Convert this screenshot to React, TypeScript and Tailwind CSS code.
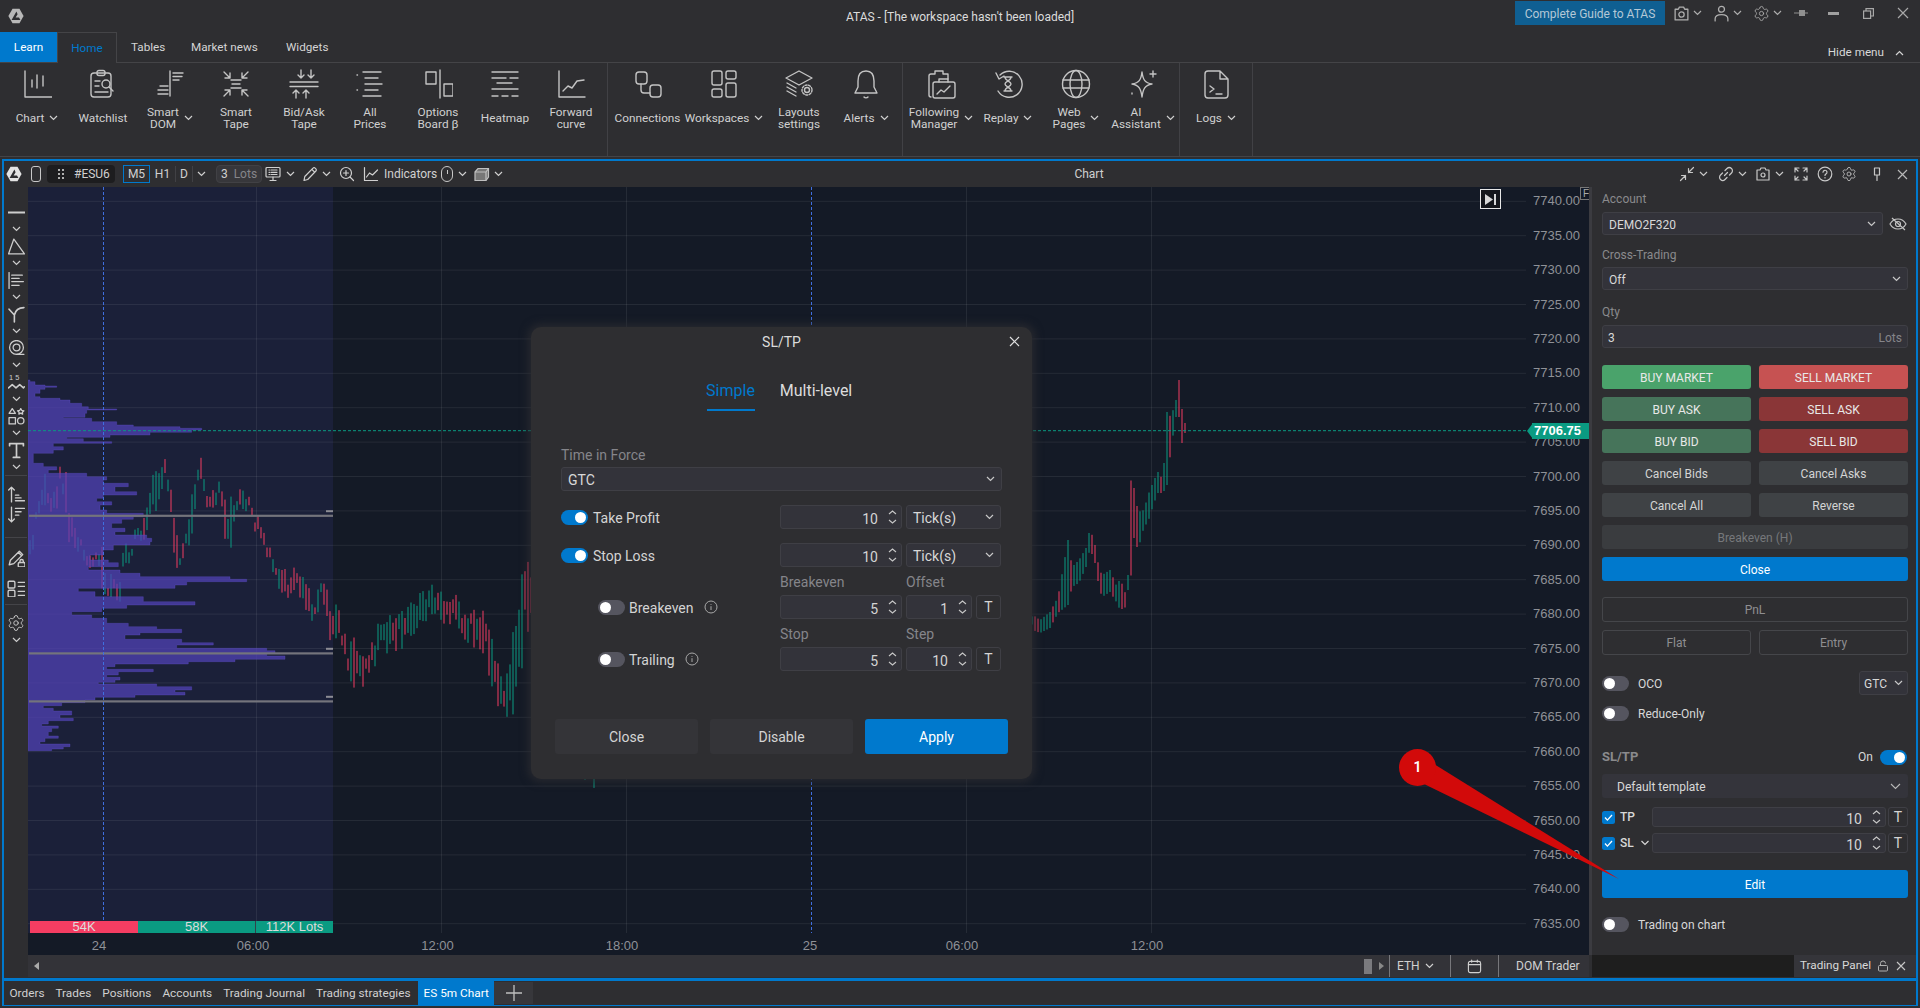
import React from "react";
import { Settings } from "lucide-react";

function Chev({ className = "" }: { className?: string }) {
  return (
    <svg width="9" height="6" viewBox="0 0 9 6" fill="none" stroke="currentColor" strokeWidth="1.2" className={className}>
      <path d="M1 1l3.5 3.5L8 1" />
    </svg>
  );
}

function Ico({ size = 16, vb = 16, sw = 1.2, children, className = "" }: { size?: number; vb?: number; sw?: number; children: React.ReactNode; className?: string }) {
  return (
    <svg width={size} height={size} viewBox={`0 0 ${vb} ${vb}`} fill="none" stroke="currentColor" strokeWidth={sw} strokeLinecap="round" strokeLinejoin="round" className={className}>
      {children}
    </svg>
  );
}

function Logo({ size = 16, color = "#b8b8b8", cut = "#2e2e31" }: { size?: number; color?: string; cut?: string }) {
  return (
    <svg width={size} height={size} viewBox="0 0 16 16">
      <path d="M4.5 0.8h7L15.6 8l-4.1 7.2h-7L.4 8z" fill={color} />
      <path d="M8.4 3.6L3.6 12h8.8l-1.4-2.4H7.6l2-3.4z" fill={cut} />
    </svg>
  );
}

const ribbonIcons: Record<string, React.ReactNode> = {
  chart: <path d="M3 2v26h27M10 11v7M15 6v13M21 7v10" />,
  watch: (<><rect x="3" y="4" width="20" height="24" rx="3" /><rect x="9" y="1.5" width="8" height="5" rx="2" /><path d="M7 12h5M7 17h4M7 23h13M21 18l4 4" /><circle cx="18" cy="15" r="4" /></>),
  dom: <path d="M15 2v25M18 4h10M18 7.5h9M18 11h6M5 17h8M3 21h10M3 25h10" />,
  tape: <path d="M3 3l6 6M9 4v5H4M27 3l-6 6M21 4v5h5M3 27l6-6M9 26v-5H4M27 27l-6-6M21 26v-5h5M10 11h10M11 15h8M10 19h10" />,
  bidask: <path d="M12 1v8M9 6l3 3 3-3M22 1v8M19 6l3 3 3-3M1 13h28M1 17.5h28M7 29v-8M4 24l3-3 3 3M17 29v-8M14 24l3-3 3 3" />,
  all: <path d="M8 3h18M10 9h13M10 15h17M10 21h13M8 27h18M2 6h.5M2 21h.5" />,
  options: (<><rect x="3" y="3" width="10" height="12" /><path d="M17 1v28" /><rect x="21" y="15" width="9" height="12" /></>),
  heat: <path d="M2 3h26M2 9h14M20 9h8M7 14h15M2 20h26M2 27h6M12 27h6M22 27h6" />,
  forward: <path d="M3 2v26h26M7 22l5-5 4 2 5-7 7-1" />,
  conn: (<><rect x="3" y="3" width="11" height="12" rx="3" /><rect x="17" y="16" width="11" height="12" rx="3" /><path d="M8 15v6a3 3 0 0 0 3 3h6" /></>),
  work: (<><rect x="3" y="2" width="10" height="14" rx="2" /><rect x="17" y="2" width="10" height="8" rx="2" /><rect x="3" y="20" width="10" height="8" rx="2" /><rect x="17" y="14" width="10" height="14" rx="2" /></>),
  layouts: (<><path d="M15 2L28 9 15 16 2 9z" /><path d="M3 14l9 5M3 18l9 5M3 22l9 5" /><circle cx="23" cy="21" r="2.5" /><circle cx="23" cy="21" r="5" strokeDasharray="2 1.5" /></>),
  bell: <path d="M15 2c-6 0-8 5-8 10v6l-3 6h22l-3-6v-6c0-5-2-10-8-10zM13 28c1 1.2 3 1.2 4 0" />,
  follow: (<><path d="M8 5H5a2 2 0 0 0-2 2v19a2 2 0 0 0 2 2M9 5V2h8v3h5v5" /><rect x="7" y="13" width="22" height="16" rx="2" /><path d="M13 13v-3h9v3M11 25l4-4 3 2 6-6" /></>),
  replay: <path d="M7 6a13 13 0 1 1-2 16M3 4l3 6 5-3M11 8h8M11 22h8M12 8c0 4 6 4 6 7s-6 3-6 7M18 8c0 4-6 4-6 7s6 3 6 7" />,
  web: (<><circle cx="15" cy="15" r="13.5" /><ellipse cx="15" cy="15" rx="6" ry="13.5" /><path d="M2 11h26M2 19h26" /></>),
  ai: <path d="M14 3c1 8 3 11 10 12-7 1-9 5-10 13-1-8-3-12-10-13 7-1 9-4 10-12zM25 2v6M22 5h6M4 24v1" />,
  logs: <path d="M4 5a3 3 0 0 1 3-3h12l8 8v16a3 3 0 0 1-3 3H7a3 3 0 0 1-3-3zM19 2v8h8M9 17l4 3-4 3M15 25h6" />,
};

type RI = { icon: string; w: number; label: string[]; chev?: boolean };
const sections: { w: number; items: RI[] }[] = [
  {
    w: 608,
    items: [
      { icon: "chart", w: 66, label: ["Chart"], chev: true },
      { icon: "watch", w: 66, label: ["Watchlist"] },
      { icon: "dom", w: 68, label: ["Smart", "DOM"], chev: true },
      { icon: "tape", w: 64, label: ["Smart", "Tape"] },
      { icon: "bidask", w: 72, label: ["Bid/Ask", "Tape"] },
      { icon: "all", w: 60, label: ["All", "Prices"] },
      { icon: "options", w: 76, label: ["Options", "Board β"] },
      { icon: "heat", w: 58, label: ["Heatmap"] },
      { icon: "forward", w: 74, label: ["Forward", "curve"] },
    ],
  },
  {
    w: 295,
    items: [
      { icon: "conn", w: 79, label: ["Connections"] },
      { icon: "work", w: 74, label: ["Workspaces"], chev: true },
      { icon: "layouts", w: 76, label: ["Layouts", "settings"] },
      { icon: "bell", w: 58, label: ["Alerts"], chev: true },
    ],
  },
  {
    w: 277,
    items: [
      { icon: "follow", w: 76, label: ["Following", "Manager"], chev: true },
      { icon: "replay", w: 58, label: ["Replay"], chev: true },
      { icon: "web", w: 78, label: ["Web", "Pages"], chev: true },
      { icon: "ai", w: 56, label: ["AI", "Assistant"], chev: true },
    ],
  },
  { w: 73, items: [{ icon: "logs", w: 72, label: ["Logs"], chev: true }] },
];

function RibbonItem({ item }: { item: RI }) {
  return (
    <div className="flex flex-col items-center shrink-0" style={{ width: item.w }}>
      <div className="mt-[6px] h-[30px] text-[#c4c4c4]">
        <Ico size={30} vb={30} sw={1.4}>{ribbonIcons[item.icon]}</Ico>
      </div>
      <div className="mt-[4px] h-[30px] flex items-center gap-[5px] text-[11.8px] leading-[12px] text-[#d0d0d0] whitespace-nowrap">
        <div className="text-center">
          {item.label.map((l) => (
            <div key={l}>{l}</div>
          ))}
        </div>
        {item.chev && <Chev className="shrink-0" />}
      </div>
    </div>
  );
}

/* ---------- chart data ---------- */
const PY = (p: number) => 201.3 + (7740 - p) * 6.88;
const prices = Array.from({ length: 22 }, (_, i) => 7740 - i * 5);
const vlines = [256, 441, 626, 966, 1151];
const times: [number, string][] = [[99, "24"], [253, "06:00"], [437.5, "12:00"], [622, "18:00"], [810, "25"], [962, "06:00"], [1147, "12:00"]];

const W: [number, number, number][] = [
  [30, 530, 563], [37, 510, 523], [45, 483, 520], [53, 495, 515], [63, 457, 490], [66, 467, 513], [68, 488, 552], [77, 537, 552], [84, 548, 560],
  [97, 553, 566], [102, 550, 603], [107, 573, 597], [120, 573, 592], [122, 548, 578], [133, 543, 550], [140, 527, 548], [146, 510, 537], [148, 497, 513],
  [157, 470, 513], [163, 455, 487], [167, 472, 493], [172, 488, 550], [176, 537, 582], [180, 547, 567], [188, 532, 567], [193, 492, 535], [197, 472, 493],
  [202, 457, 480], [207, 477, 497], [211, 493, 515], [220, 480, 510], [223, 508, 543], [230, 507, 563], [235, 505, 520], [248, 493, 517], [257, 517, 527],
  [260, 527, 542], [272, 553, 568], [277, 557, 580], [283, 565, 595], [297, 580, 600], [307, 585, 610], [315, 598, 617], [323, 577, 603], [333, 610, 645],
  [338, 600, 628], [343, 630, 660], [355, 637, 686], [367, 650, 680], [380, 625, 650], [404, 612, 650], [428, 588, 618], [443, 585, 612], [465, 600, 625],
  [484, 618, 667], [496, 650, 692], [506, 686, 720], [514, 625, 710], [523, 570, 667], [530, 575, 640], [587, 750, 787], [700, 650, 700], [850, 600, 660],
  [1033, 615, 630], [1040, 620, 633], [1050, 612, 628], [1058, 597, 613], [1068, 540, 605], [1072, 567, 587], [1079, 560, 583], [1086, 548, 567], [1090, 528, 548],
  [1095, 545, 563], [1099, 568, 587], [1102, 575, 597], [1110, 570, 592], [1117, 587, 603], [1120, 578, 610], [1126, 595, 607], [1128, 575, 590], [1130, 478, 588],
  [1134, 488, 538], [1138, 512, 550], [1144, 510, 527], [1148, 495, 522], [1154, 480, 503], [1158, 472, 493], [1163, 480, 493], [1167, 412, 485], [1171, 417, 448],
  [1176, 400, 417], [1179, 380, 417], [1182, 409, 443], [1185, 423, 433],
];

function buildBars() {
  let seed = 987654;
  const r = () => {
    seed = (seed * 1103515245 + 12345) & 0x7fffffff;
    return seed / 0x7fffffff;
  };
  let green = "";
  let red = "";
  let wi = 0;
  let walk = 0;
  for (let x = 30; x <= 1185; x += 3) {
    while (wi < W.length - 2 && W[wi + 1][0] < x) wi++;
    const a = W[wi];
    const b = W[wi + 1];
    const k = Math.min(1, (x - a[0]) / (b[0] - a[0]));
    const top = a[1] + (b[1] - a[1]) * k;
    const bot = a[2] + (b[2] - a[2]) * k;
    const slope = b[1] - a[1];
    let t: number;
    let bt: number;
    let up: boolean;
    if (x >= 1033) {
      t = top;
      bt = Math.max(bot, top + 6);
      up = x === 1179 ? false : x === 1176 ? true : r() < 0.2 ? r() < 0.5 : slope < 0;
    } else {
      const env = Math.max(bot - top, 14);
      const len = Math.max(6, env * (0.3 + r() * 0.8));
      const off = (env - len) * r();
      walk = walk * 0.6 + (r() - 0.5) * 18;
      t = top + off + walk;
      bt = t + len;
      up = r() < 0.4 ? r() < 0.5 : slope < 0;
    }
    const seg = `M${x.toFixed(1)} ${t.toFixed(1)}V${bt.toFixed(1)}`;
    if (up) green += seg;
    else red += seg;
  }
  return { green, red };
}
const bars = buildBars();

const P: [number, number][] = [
  [600, 90], [605, 105], [615, 135], [618, 170], [622, 135], [628, 120], [640, 105], [650, 120], [655, 180], [660, 210], [670, 245], [680, 265], [687, 350], [690, 260], [700, 255], [712, 190], [715, 275], [725, 350], [735, 400],
  [740, 540], [745, 605], [750, 575], [757, 450], [765, 330], [772, 200], [776, 250], [785, 335], [790, 160], [800, 190], [810, 160], [820, 100], [850, 130], [860, 170], [870, 145], [880, 260], [890, 320], [900, 310], [910, 385],
  [920, 345], [935, 410], [945, 310], [955, 290], [965, 335], [975, 300], [990, 320], [1000, 430], [1010, 400], [1018, 365], [1030, 335], [1045, 375], [1055, 345], [1065, 440], [1075, 455], [1085, 450], [1095, 340], [1110, 310],
  [1125, 270], [1140, 325], [1148, 355], [1160, 265], [1170, 360], [1180, 420], [1190, 690], [1198, 740], [1205, 560], [1215, 525], [1225, 235], [1235, 285], [1250, 430], [1265, 585], [1275, 380], [1285, 305], [1295, 215],
  [1305, 275], [1315, 320], [1330, 385], [1340, 470], [1348, 545], [1358, 420], [1365, 375], [1378, 545], [1388, 640], [1395, 530],
  [1405, 800], [1412, 825], [1420, 800], [1428, 855], [1438, 705], [1445, 565], [1452, 345], [1460, 320], [1468, 460], [1475, 355], [1485, 320], [1492, 360], [1500, 345], [1507, 295], [1512, 470], [1520, 575], [1530, 525], [1537, 555],
  [1545, 405], [1552, 285], [1560, 255], [1568, 185], [1577, 130], [1585, 160], [1593, 215], [1605, 180], [1615, 220], [1622, 145], [1632, 125], [1638, 175], [1645, 155], [1655, 145], [1668, 175], [1675, 135], [1685, 120], [1692, 210], [1700, 190], [1707, 155],
];
const profilePath = (() => {
  const fy = (z: number) => (180 + z / 3).toFixed(1);
  let d = `M28 ${fy(P[0][0])}`;
  P.forEach(([zy, zx], i) => {
    const next = i + 1 < P.length ? P[i + 1][0] : 1712;
    d += `H${(zx / 3).toFixed(1)}V${fy(next)}`;
  });
  return d + "H28Z";
})();

function ChartSvg() {
  return (
    <svg className="absolute inset-0" width="1561" height="746" viewBox="28 187 1561 746">
      <rect x="28" y="187" width="305" height="746" fill="#1b2039" />
      {prices.map((p) => (
        <line key={p} x1="28" x2="1526" y1={PY(p)} y2={PY(p)} stroke="#ffffff" strokeOpacity="0.075" />
      ))}
      {vlines.map((x) => (
        <line key={x} x1={x + 0.5} x2={x + 0.5} y1="187" y2="933" stroke="#ffffff" strokeOpacity="0.075" />
      ))}
      <path d={bars.green} stroke="#0a9b82" strokeWidth="1" fill="none" />
      <path d={bars.red} stroke="#f23d63" strokeWidth="1" fill="none" />
      <path d={profilePath} fill="#5243b8" fillOpacity="0.72" stroke="#6454d0" strokeOpacity="0.5" strokeWidth="0.6" />
      {[515.7, 653.3, 701.3].map((y) => (
        <g key={y}>
          <rect x="29" y={y - 1} width="304" height="2.2" fill="#74747c" />
          <rect x="326" y={y - 5.5} width="7" height="2" fill="#8c8c94" />
        </g>
      ))}
      <line x1="103.5" x2="103.5" y1="187" y2="933" stroke="#3f6fe0" strokeDasharray="3 2" />
      <line x1="811.5" x2="811.5" y1="187" y2="933" stroke="#3f6fe0" strokeDasharray="3 2" />
      <line x1="28" x2="1527" y1="430.7" y2="430.7" stroke="#0a9b82" strokeDasharray="3 2" />
      <polygon points="1527,431 1533,423 1533,439" fill="#0a9b82" />
    </svg>
  );
}

/* ---------- small controls ---------- */
function Toggle({ on = false }: { on?: boolean }) {
  return (
    <span className={`relative inline-block w-[27px] h-[15px] rounded-full shrink-0 ${on ? "bg-[#0079cd]" : "bg-[#55555f]"}`}>
      <span className={`absolute top-[2px] w-[11px] h-[11px] rounded-full bg-white ${on ? "right-[2px]" : "left-[2px]"}`} />
    </span>
  );
}

function Spinner() {
  return (
    <svg width="9" height="16" viewBox="0 0 9 16" fill="none" stroke="#c8c8c8" strokeWidth="1.1" className="shrink-0">
      <path d="M1 5l3.5-3L8 5M1 11l3.5 3L8 11" />
    </svg>
  );
}

function NumBox({ value, h = 24 }: { value: string; h?: number }) {
  return (
    <div
      className="flex items-center justify-end rounded-[3px] border border-[#3f3f45] bg-[#33333a] pr-[4px] text-[14px] text-[#d4d4d4] flex-1"
      style={{ height: h }}
    >
      <span className="pt-[4px] mr-[10px]">{value}</span>
      <Spinner />
    </div>
  );
}

function TBox({ w = 25, h = 24 }: { w?: number; h?: number }) {
  return (
    <div className="flex items-center justify-center rounded-[3px] border border-[#3f3f45] text-[14px] text-[#d4d4d4]" style={{ width: w, height: h }}>
      T
    </div>
  );
}

function Select({ children, h = 24, className = "" }: { children: React.ReactNode; h?: number; className?: string }) {
  return (
    <div
      className={`flex items-center justify-between rounded-[3px] border border-[#3f3f45] bg-[#33333a] px-[6px] text-[#d8d8d8] ${className}`}
      style={{ height: h }}
    >
      <span className="pt-[2px]">{children}</span>
      <Chev className="text-[#c8c8c8]" />
    </div>
  );
}

function Info() {
  return (
    <svg width="14" height="14" viewBox="0 0 14 14" fill="none" stroke="#a8a8a8" strokeWidth="1" className="shrink-0">
      <circle cx="7" cy="7" r="6" />
      <path d="M7 6.2V10M7 4v.8" />
    </svg>
  );
}

function Btn({ children, cls }: { children: React.ReactNode; cls: string }) {
  return <div className={`h-[24px] pt-[2px] rounded-[3px] flex items-center justify-center text-[12px] ${cls}`}>{children}</div>;
}

function Check() {
  return (
    <svg width="13" height="13" viewBox="0 0 13 13" className="shrink-0">
      <rect width="13" height="13" rx="2.5" fill="#0079cd" />
      <path d="M3 6.5l2.4 2.6L10 4" fill="none" stroke="#fff" strokeWidth="1.3" />
    </svg>
  );
}

/* ---------- left toolbar ---------- */
const toolIcons: React.ReactNode[] = [
  <path d="M.5 8h15M6 8h3" strokeWidth="2" />,
  <path d="M5.500 1L15.500 15H.500z" />,
  <path d="M1 .5v15M3.500 3h10M3.500 6h7M3.500 9h11M3.500 12.500h7" />,
  <path d="M1 3l5 5.500V15M6 8.500C7 4 10.500 1.500 15 1.500" strokeWidth="1.500" />,
  <><circle cx="8" cy="7" r="6.500" /><circle cx="8" cy="7" r="3.200" /><path d="M8 13.500h7" /></>,
  <><text x="1" y="6" fontSize="7" fill="currentColor" stroke="none" fontFamily="Liberation Sans, sans-serif">1 5</text><path d="M.5 13l3.500-3 3.500 3 3.500-3 3.500 3 1-1" strokeWidth="1.500" /></>,
  <><path d="M4 .500l3 4.500H1zM12 .500l1 1.800 2 .3-1.500 1.300.3 1.800-1.800-.9-1.800.9.3-1.800L9 2.600l2-.3z" /><rect x="1" y="9" width="6" height="6" /><circle cx="12" cy="12" r="3" /></>,
  <path d="M1.500 3.500V1.500h13v2M8 1.500V14.500M5 14.500h6" strokeWidth="1.600" />,
];

function LeftToolbar() {
  return (
    <div className="w-[24px] shrink-0 bg-[#2e2e31] flex flex-col items-center text-[#cdcdcd]">
      <div className="h-[16px] w-full flex items-start justify-center pt-[4px]">
        <div className="w-[14px] h-[3px] bg-[radial-gradient(#b8b8b8_0.6px,transparent_0.7px)] bg-[length:2px_2px]" />
      </div>
      {toolIcons.map((ic, i) => (
        <div key={i} className="h-[34px] flex flex-col items-center">
          <div className="h-[18px] flex items-center">
            <Ico size={17} sw={1.2}>{ic}</Ico>
          </div>
          <div className="h-[16px] flex items-center">
            <Chev />
          </div>
        </div>
      ))}
      <div className="w-[22px] h-px bg-[#444448]" />
      <div className="mt-[8px] h-[20px] flex items-center">
        <Ico size={18}><path d="M4 15V2M1.500 4.500L4 2l2.500 2.500M7.500 9h3M7.500 11.500h5M7.500 14h8" /></Ico>
      </div>
      <div className="h-[20px] flex items-center">
        <Ico size={18}><path d="M4 2v13M1.500 12.500L4 15l2.500-2.500M7.500 3h8M7.500 6h5M7.500 9h3" /></Ico>
      </div>
      <div className="mt-[13px] w-[22px] h-px bg-[#444448]" />
      <div className="mt-[10px] h-[20px] flex items-center">
        <Ico size={18}><path d="M2 14l1-4L11 2l3 3-8 8zM10 3l3 3" /><rect x="10" y="12" width="6" height="4" rx="1" /><path d="M11.500 12v-1.200a1.500 1.500 0 0 1 3 0V12" /></Ico>
      </div>
      <div className="mt-[10px] h-[20px] flex items-center">
        <Ico size={18}><rect x="1" y="2" width="6" height="6" rx="1" /><rect x="1" y="10" width="6" height="6" rx="1" /><path d="M10 3h7M10 6.500h7M10 11h7M10 14.500h7" /></Ico>
      </div>
      <div className="mt-[6px] w-[22px] h-px bg-[#444448]" />
      <div className="mt-[8px] h-[20px] flex items-center">
        <Settings size={18} strokeWidth={1.2} />
      </div>
      <div className="h-[14px] flex items-center">
        <Chev />
      </div>
    </div>
  );
}

/* ---------- right panel ---------- */
function RightPanel() {
  return (
    <div className="flex-1 flex flex-col min-w-0">
      <div className="flex-1 pl-[10px] pr-[8px] text-[12px] text-[#d8d8d8] flex flex-col">
        <div className="mt-[5px] h-[14px] leading-[14px] text-[#8a8a8d]">Account</div>
        <div className="mt-[6px] flex items-center gap-[6px]">
          <Select h={23} className="flex-1">DEMO2F320</Select>
          <svg width="18" height="16" viewBox="0 0 18 16" fill="none" stroke="#c4c4c4" strokeWidth="1.2" className="shrink-0 mr-[1px]">
            <path d="M1 8c2-3.500 5-5 8-5s6 1.500 8 5c-2 3.500-5 5-8 5s-6-1.500-8-5zM3 2l13 12" />
            <circle cx="9" cy="8" r="2.500" />
          </svg>
        </div>
        <div className="mt-[13px] h-[14px] leading-[14px] text-[#8a8a8d]">Cross-Trading</div>
        <Select h={23} className="mt-[5px]">Off</Select>
        <div className="mt-[15px] h-[14px] leading-[14px] text-[#8a8a8d]">Qty</div>
        <div className="mt-[6px] h-[23px] pt-[2px] rounded-[3px] border border-[#3f3f45] bg-[#33333a] px-[5px] flex items-center justify-between">
          <span>3</span>
          <span className="text-[#85858a]">Lots</span>
        </div>
        <div className="mt-[17px] grid grid-cols-2 gap-x-[8px] gap-y-[8px] text-[#e8e8e8]">
          <Btn cls="bg-[#4aa36b]">BUY MARKET</Btn>
          <Btn cls="bg-[#c65252]">SELL MARKET</Btn>
          <Btn cls="bg-[#46745a]">BUY ASK</Btn>
          <Btn cls="bg-[#8a3637]">SELL ASK</Btn>
          <Btn cls="bg-[#46745a]">BUY BID</Btn>
          <Btn cls="bg-[#8a3637]">SELL BID</Btn>
          <Btn cls="bg-[#3f4245] text-[#d4d4d4]">Cancel Bids</Btn>
          <Btn cls="bg-[#3f4245] text-[#d4d4d4]">Cancel Asks</Btn>
          <Btn cls="bg-[#3f4245] text-[#d4d4d4]">Cancel All</Btn>
          <Btn cls="bg-[#3f4245] text-[#d4d4d4]">Reverse</Btn>
          <Btn cls="col-span-2 bg-[#3a3c3f] text-[#76787b]">Breakeven (H)</Btn>
          <Btn cls="col-span-2 bg-[#0079cd] text-white">Close</Btn>
        </div>
        <div className="mt-[16px] h-[25px] rounded-[3px] border border-[#45464a] flex items-center justify-center text-[#8e8e91]">PnL</div>
        <div className="mt-[8px] grid grid-cols-2 gap-x-[8px]">
          <div className="h-[25px] rounded-[3px] border border-[#45464a] flex items-center justify-center text-[#8e8e91]">Flat</div>
          <div className="h-[25px] rounded-[3px] border border-[#45464a] flex items-center justify-center text-[#8e8e91]">Entry</div>
        </div>
        <div className="mt-[16px] h-[24px] flex items-center justify-between">
          <div className="flex items-center gap-[9px]">
            <Toggle />
            <span className="pt-[2px]">OCO</span>
          </div>
          <Select className="w-[49px] !px-[4px]">GTC</Select>
        </div>
        <div className="mt-[6px] h-[24px] flex items-center gap-[9px]">
          <Toggle />
          <span className="pt-[2px]">Reduce-Only</span>
        </div>
        <div className="mt-[22px] h-[20px] flex items-center justify-between">
          <span className="text-[13px] font-bold text-[#8a8a8d]">SL/TP</span>
          <div className="flex items-center gap-[7px] mr-[1px]">
            <span>On</span>
            <Toggle on />
          </div>
        </div>
        <div className="mt-[7px] h-[24px] rounded-[3px] bg-[#34343b] pl-[15px] pr-[7px] flex items-center justify-between">
          <span className="pt-[2px]">Default template</span>
          <svg width="11" height="7" viewBox="0 0 11 7" fill="none" stroke="#b8b8b8" strokeWidth="1.1"><path d="M1 1l4.500 4.500L10 1" /></svg>
        </div>
        <div className="mt-[9px] flex items-center">
          <Check />
          <span className="ml-[5px] w-[32px] font-medium">TP</span>
          <NumBox value="10" h={20} />
          <div className="ml-[2px]"><TBox w={20} h={20} /></div>
        </div>
        <div className="mt-[6px] flex items-center">
          <Check />
          <span className="ml-[5px] w-[20px] font-medium">SL</span>
          <Chev className="w-[10px] mr-[2px]" />
          <NumBox value="10" h={20} />
          <div className="ml-[2px]"><TBox w={20} h={20} /></div>
        </div>
        <div className="mt-[17px] h-[28px] pt-[2px] rounded-[3px] bg-[#0079cd] text-white flex items-center justify-center">Edit</div>
        <div className="mt-[16px] h-[20px] flex items-center gap-[9px]">
          <Toggle />
          <span className="pt-[2px]">Trading on chart</span>
        </div>
      </div>
      <div className="h-[22px] mb-[1px] flex shrink-0">
        <div className="w-[202px] bg-[#1e1e1e]" />
        <div className="flex-1 bg-[#35353a] flex items-center pl-[6px] text-[11.7px] text-[#d8d8d8]">
          <span className="w-[71px] whitespace-nowrap">Trading Panel</span>
          <svg width="12" height="12" viewBox="0 0 12 12" fill="none" stroke="#b0b0b0" strokeWidth="1" className="ml-[6px]"><rect x="1.500" y="5.500" width="9" height="5.500" rx="1" /><path d="M3.500 5.500V3.500a2.500 2.500 0 0 1 5 0" /></svg>
          <svg width="10" height="10" viewBox="0 0 10 10" fill="none" stroke="#c8c8c8" strokeWidth="1.1" className="ml-[7px]"><path d="M1 1l8 8M9 1l-8 8" /></svg>
        </div>
      </div>
    </div>
  );
}

/* ---------- dialog ---------- */
function Dialog() {
  return (
    <div className="absolute left-[531px] top-[327px] w-[501px] h-[452px] rounded-[10px] bg-[#2e2e31] shadow-[0_0_9px_3px_rgba(46,46,49,0.75)] px-[30px] z-10 text-[#d4d4d4]">
      <div className="relative h-[30px] flex items-center justify-center text-[14px] text-[#dcdcdc]">
        SL/TP
        <svg width="11" height="11" viewBox="0 0 11 11" fill="none" stroke="#e0e0e0" strokeWidth="1.2" className="absolute right-[-18px] top-[9px]">
          <path d="M1 1l9 9M10 1l-9 9" />
        </svg>
      </div>
      <div className="mt-[19px] h-[35px] pr-[3px] flex justify-center gap-[24px] text-[16px]">
        <div className="w-[48px] h-[35px] flex items-center justify-center whitespace-nowrap pb-[4px] border-b-2 border-[#0079cd] text-[#0079cd]">Simple</div>
        <div className="w-[75px] h-[35px] flex items-center justify-center whitespace-nowrap pb-[6px] text-[#dcdcdc]">Multi-level</div>
      </div>
      <div className="mt-[36px] h-[14px] pt-[1px] leading-[14px] text-[14px] text-[#85858a]">Time in Force</div>
      <Select className="mt-[6px] text-[14px]">GTC</Select>
      <div className="mt-[14px] flex items-center">
        <div className="w-[219px] flex items-center gap-[5px] text-[14px]"><Toggle on /><span className="pt-[2px]">Take Profit</span></div>
        <div className="w-[122px] flex"><NumBox value="10" /></div>
        <div className="ml-[4px] w-[95px]"><Select className="text-[14px]">Tick(s)</Select></div>
      </div>
      <div className="mt-[14px] flex items-center">
        <div className="w-[219px] flex items-center gap-[5px] text-[14px]"><Toggle on /><span className="pt-[2px]">Stop Loss</span></div>
        <div className="w-[122px] flex"><NumBox value="10" /></div>
        <div className="ml-[4px] w-[95px]"><Select className="text-[14px]">Tick(s)</Select></div>
      </div>
      <div className="mt-[8px] h-[14px] leading-[14px] text-[14px] text-[#85858a] flex">
        <span className="ml-[219px] w-[126px]">Breakeven</span>
        <span>Offset</span>
      </div>
      <div className="mt-[6px] flex items-center">
        <div className="w-[219px] pl-[37px] flex items-center text-[14px]">
          <Toggle />
          <span className="ml-[4px] pt-[2px]">Breakeven</span>
          <span className="ml-[10px]"><Info /></span>
        </div>
        <div className="w-[122px] flex"><NumBox value="5" /></div>
        <div className="ml-[4px] w-[66px] flex"><NumBox value="1" /></div>
        <div className="ml-[4px]"><TBox /></div>
      </div>
      <div className="mt-[8px] h-[14px] leading-[14px] text-[14px] text-[#85858a] flex">
        <span className="ml-[219px] w-[126px]">Stop</span>
        <span>Step</span>
      </div>
      <div className="mt-[6px] flex items-center">
        <div className="w-[219px] pl-[37px] flex items-center text-[14px]">
          <Toggle />
          <span className="ml-[4px] pt-[2px]">Trailing</span>
          <span className="ml-[10px]"><Info /></span>
        </div>
        <div className="w-[122px] flex"><NumBox value="5" /></div>
        <div className="ml-[4px] w-[66px] flex"><NumBox value="10" /></div>
        <div className="ml-[4px]"><TBox /></div>
      </div>
      <div className="mt-[48px] mx-[-6px] flex gap-[12px] text-[14px]">
        <div className="flex-1 h-[35px] pt-[2px] rounded-[3px] bg-[#343438] flex items-center justify-center">Close</div>
        <div className="flex-1 h-[35px] pt-[2px] rounded-[3px] bg-[#343438] flex items-center justify-center">Disable</div>
        <div className="flex-1 h-[35px] pt-[2px] rounded-[3px] bg-[#0079cd] text-white flex items-center justify-center">Apply</div>
      </div>
    </div>
  );
}

/* ---------- app ---------- */
export default function App() {
  return (
    <div className="relative w-[1920px] h-[1008px] overflow-hidden bg-[#2e2e31] flex flex-col text-[#d4d4d4] [font-family:'Roboto',sans-serif]">
      {/* title bar */}
      <div className="h-[32px] shrink-0 grid grid-cols-[1fr_auto_1fr] items-center">
        <div className="pl-[8px]"><Logo /></div>
        <div className="pt-[2px] text-[12px] text-[#dcdcdc]">ATAS - [The workspace hasn't been loaded]</div>
        <div className="flex items-center justify-end h-full pb-[6px] text-[#aeaeae]">
          <div className="w-[150px] h-[24px] pt-[2px] bg-[#0f5f92] text-[#b4c8d6] text-[12px] flex items-center justify-center whitespace-nowrap">Complete Guide to ATAS</div>
          <div className="ml-[8px]"><Ico size={17}><path d="M2 4h3l1-2h4l1 2h3v10H2z" /><circle cx="8" cy="9" r="2.500" /></Ico></div>
          <Chev className="ml-[3px]" />
          <div className="ml-[11px]"><Ico size={17}><circle cx="8" cy="4" r="2.800" /><path d="M2 15v-2c0-2.500 2-4 6-4s6 1.500 6 4v2" /></Ico></div>
          <Chev className="ml-[3px]" />
          <div className="ml-[11px]"><Settings size={17} strokeWidth={1.2} /></div>
          <Chev className="ml-[3px]" />
          <div className="ml-[12px] w-[14px]"><svg width="14" height="8" viewBox="0 0 14 8" fill="#909090"><path d="M0 3.500h5V1h6v2.500h3v1h-3V7H5V4.500H0z" /></svg></div>
          <div className="ml-[20px] w-[11px] h-[3px] bg-[#a0a0a0]" />
          <div className="ml-[24px]"><svg width="11" height="11" viewBox="0 0 11 11" fill="none" stroke="#a8a8a8" strokeWidth="1.2"><rect x="0.600" y="3" width="7" height="7.400" /><path d="M3 3V.6h7.400V8H8" /></svg></div>
          <div className="ml-[23px] mr-[11px]"><svg width="12" height="12" viewBox="0 0 12 12" fill="none" stroke="#a8a8a8" strokeWidth="1.2"><path d="M1 1l10 10M11 1L1 11" /></svg></div>
        </div>
      </div>

      {/* tabs row */}
      <div className="h-[31px] shrink-0 flex items-stretch border-b border-[#444447] text-[11.7px]">
        <div className="w-[57px] pt-[2px] bg-[#0079cd] text-white flex items-center justify-center">Learn</div>
        <div className="w-[60px] h-[31px] pt-[2px] border border-b-0 border-[#444447] bg-[#2e2e31] text-[#0079cd] flex items-center justify-center">Home</div>
        <div className="ml-[14px] w-[32px] pt-[2px] flex items-center">Tables</div>
        <div className="ml-[28px] w-[67px] pt-[2px] flex items-center whitespace-nowrap">Market news</div>
        <div className="ml-[28px] pt-[2px] flex items-center">Widgets</div>
        <div className="ml-auto flex items-center pr-[16px] pt-[12px]">
          <span className="text-[#d8d8d8] whitespace-nowrap">Hide menu</span>
          <Chev className="ml-[11px] rotate-180" />
        </div>
      </div>

      {/* ribbon */}
      <div className="h-[94px] shrink-0 flex border-b border-[#444447]">
        {sections.map((s, i) => (
          <div key={i} className={`h-full flex border-r border-[#414145] ${i === 0 ? "pl-[4px]" : "pl-0"}`} style={{ width: s.w }}>
            {s.items.map((it) => (
              <RibbonItem key={it.icon} item={it} />
            ))}
          </div>
        ))}
      </div>

      {/* chart window */}
      <div className="mt-[2px] mx-[2px] h-[847px] shrink-0 border-t-2 border-x-2 border-b border-[#0079cd] flex flex-col">
        {/* header */}
        <div className="h-[26px] shrink-0 flex items-center text-[12px] text-[#d0d0d0]">
          <div className="ml-[2px]"><Logo color="#e4e4e4" /></div>
          <div className="ml-[9px] w-[10px] h-[16px] rounded-[3px] border border-[#c8c8c8]" />
          <div className="ml-[6px] w-[68px] h-[18px] rounded-[4px] bg-[#1d1d1f] flex items-center">
            <svg width="6" height="10" viewBox="0 0 6 10" fill="#b0b0b0" className="ml-[11px]"><rect width="2" height="2" /><rect x="4" width="2" height="2" /><rect y="4" width="2" height="2" /><rect x="4" y="4" width="2" height="2" /><rect y="8" width="2" height="2" /><rect x="4" y="8" width="2" height="2" /></svg>
            <span className="ml-[10px]">#ESU6</span>
          </div>
          <div className="ml-[8px] w-[27px] h-[18px] border border-[#0079cd] flex items-center justify-center">M5</div>
          <div className="w-[25px] text-center">H1</div>
          <div className="h-[16px] w-px bg-[#414145]" />
          <div className="w-[16px] text-center">D</div>
          <div className="h-[16px] w-px bg-[#414145]" />
          <div className="w-[16px] flex justify-center"><Chev /></div>
          <div className="ml-[7px] w-[46px] h-[18px] rounded-[4px] border border-[#414145] bg-[#37373b] flex items-center justify-center gap-[6px] whitespace-nowrap">
            <span>3</span><span className="text-[#85858a]">Lots</span>
          </div>
          <div className="ml-[3px]"><Ico size={16}><rect x="1" y="1.500" width="14" height="9.500" rx="1" /><path d="M4 4h.6M6 4h6M4 6.300h.6M6 6.300h6M4 8.500h.6M6 8.500h6M8 11v3M5 14.500h6" /></Ico></div>
          <Chev className="ml-[5px]" />
          <div className="ml-[7px]"><Ico size={16}><path d="M2 14.500l.8-4L11 2.200a1.500 1.500 0 0 1 2.200 0l.7.700a1.500 1.500 0 0 1 0 2.100L5.700 13.500zM10 3.500l2.600 2.600" /></Ico></div>
          <Chev className="ml-[4px]" />
          <div className="ml-[8px]"><Ico size={16}><circle cx="7" cy="7" r="5.500" /><path d="M11 11l3.500 3.500M7 4.500v5M4.500 7h5" /></Ico></div>
          <div className="ml-[8px]"><Ico size={16}><path d="M1.500 1.500v13h13M3.500 11l3-4 3 2 5-5" /></Ico></div>
          <span className="ml-[5px] w-[52px] whitespace-nowrap">Indicators</span>
          <div className="ml-[5px] w-[12px] h-[16px] rounded-full border border-[#c8c8c8] flex justify-center pt-[3px]"><div className="w-px h-[4px] bg-[#c8c8c8]" /></div>
          <Chev className="ml-[5px]" />
          <div className="ml-[7px]"><svg width="16" height="15" viewBox="0 0 16 15" fill="none" stroke="#c0c0c0" strokeWidth="1.200"><path d="M1 5l3-3.500h10.500V10L12 13.500H1z" fill="#777" /><path d="M1 5h11v8.500M12 5l2.500-3.500" /></svg></div>
          <Chev className="ml-[4px]" />
          <div className="w-[1160px] pl-[12px] text-center">Chart</div>
          <div className="ml-auto flex items-center text-[#c8c8c8] pr-[8px]">
            <Ico size={16}><path d="M1.500 14.500L6.500 9.500M2.500 9.500h4v4M14.500 1.500l-5 5M13.500 6.500h-4v-4" /></Ico>
            <Chev className="ml-[4px]" />
            <div className="ml-[10px]"><Ico size={16}><path d="M6.500 9.500l3-3M7 4.500l2-2a3 3 0 0 1 4.500 4.500l-2 2M9 11.500l-2 2a3 3 0 0 1-4.500-4.500l2-2" /></Ico></div>
            <Chev className="ml-[4px]" />
            <div className="ml-[8px]"><Ico size={16}><path d="M2 4h3l1-2h4l1 2h3v10H2z" /><circle cx="8" cy="9" r="2" /></Ico></div>
            <Chev className="ml-[4px]" />
            <div className="ml-[9px]"><Ico size={16}><path d="M2 6V2h4M10 2h4v4M2 10v4h4M14 10v4h-4M2 2l3 3M14 2l-3 3M2 14l3-3M14 14l-3-3" /></Ico></div>
            <div className="ml-[8px]"><Ico size={16}><circle cx="8" cy="8" r="6.800" /><path d="M6 6.200a2 2 0 1 1 2.800 1.900c-.6.300-.8.700-.8 1.400M8 11.500v.5" /></Ico></div>
            <div className="ml-[8px]"><Settings size={16} strokeWidth={1.2} /></div>
            <div className="ml-[12px]"><Ico size={16}><path d="M5.500 2h5v7h-5zM8 9v5.500" /></Ico></div>
            <div className="ml-[12px]"><svg width="11" height="11" viewBox="0 0 11 11" fill="none" stroke="#b8b8b8" strokeWidth="1.200"><path d="M1 1l9 9M10 1l-9 9" /></svg></div>
          </div>
        </div>

        {/* body */}
        <div className="flex-1 flex min-h-0">
          <LeftToolbar />
          <div className="w-[1561px] shrink-0 flex flex-col">
            <div className="relative h-[746px] shrink-0 bg-[#141a26] overflow-hidden [font-family:'Liberation_Sans',Arial,sans-serif]">
              <ChartSvg />
              {prices.map((p) => (
                <div key={p} className="absolute left-[1505px] text-[13px] leading-[16px] text-[#8f9197]" style={{ top: PY(p) - 187 - 8 }}>
                  {p.toFixed(2)}
                </div>
              ))}
              <div className="absolute left-[1504px] top-[236px] w-[57px] h-[16px] bg-[#0a9b82] text-right pr-[8px] text-[13px] leading-[16px] font-bold text-white">7706.75</div>
              <div className="absolute left-[1452px] top-[2px] w-[21px] h-[20px] border border-[#e8e8e8] bg-[#15171c] flex items-center justify-center">
                <svg width="13" height="13" viewBox="0 0 13 13" fill="#d8d8d8"><path d="M1 1l8 5.500L1 12z" /><rect x="10" y="1" width="2" height="11" /></svg>
              </div>
              <div className="absolute left-[1552px] top-0 w-[12px] h-[13px] border border-[#777] text-[10px] leading-[12px] text-center text-[#aaa]">F</div>
              <div className="absolute left-[2px] top-[734px] w-[303px] h-[12px] flex text-[13px] leading-[12px] text-center text-[#dcdcdc]">
                <div className="w-[108px] bg-[#f43d62]">54K</div>
                <div className="w-[117px] bg-[#0a9b82]">58K</div>
                <div className="w-[1px] bg-[#33414a]" />
                <div className="flex-1 bg-[#0a9b82] whitespace-nowrap">112K Lots</div>
              </div>
            </div>
            <div className="relative h-[22px] shrink-0 bg-[#141a26] [font-family:'Liberation_Sans',Arial,sans-serif] text-[13px] leading-[26px] text-[#8f9197]">
              {times.map(([x, t]) => (
                <span key={x} className="absolute -translate-x-1/2" style={{ left: x - 28 }}>{t}</span>
              ))}
            </div>
            <div className="h-[22px] mb-[1px] shrink-0 bg-[#333338] flex items-center text-[12px] text-[#d0d0d0]">
              <svg width="5" height="8" viewBox="0 0 5 8" fill="#aaa" className="ml-[6px]"><path d="M5 0v8L0 4z" /></svg>
              <div className="ml-auto w-[8px] h-[15px] bg-[#7a7a7e]" />
              <svg width="5" height="8" viewBox="0 0 5 8" fill="#888" className="ml-[7px]"><path d="M0 0v8l5-4z" /></svg>
              <div className="ml-[5px] w-px h-[22px] bg-[#77777b]" />
              <div className="w-[60px] pl-[7px] flex items-center">
                <span className="w-[28px]">ETH</span>
                <Chev />
              </div>
              <div className="w-px h-[22px] bg-[#77777b]" />
              <div className="w-[47px] flex justify-center"><Ico size={15}><rect x="1.500" y="2.500" width="13" height="12" rx="2" /><path d="M1.500 6h13M5 1v2.500M11 1v2.500" /></Ico></div>
              <div className="w-px h-[22px] bg-[#77777b]" />
              <span className="w-[90px] pl-[17px] whitespace-nowrap">DOM Trader</span>
            </div>
          </div>
          <div className="w-[3px] shrink-0 bg-[#3b3b40] mb-[23px]" />
          <RightPanel />
        </div>

        <div className="h-[3px] shrink-0 bg-[#0079cd]" />

        {/* bottom tabs */}
        <div className="h-[24px] shrink-0 flex items-center text-[11.8px] text-[#d0d0d0]">
          {["Orders", "Trades", "Positions", "Accounts", "Trading Journal", "Trading strategies"].map((t) => (
            <div key={t} className="px-[5.500px] pt-[1px] whitespace-nowrap">{t}</div>
          ))}
          <div className="ml-[2px] h-[24px] pt-[1px] px-[5.500px] bg-[#0079cd] text-white flex items-center whitespace-nowrap">ES 5m Chart</div>
          <div className="w-[39px] h-[22px] bg-[#37373b] flex items-center justify-center">
            <svg width="16" height="16" viewBox="0 0 16 16" stroke="#c0c0c0" strokeWidth="1.300"><path d="M8 0v16M0 8h16" /></svg>
          </div>
        </div>
      </div>

      <Dialog />

      {/* annotation arrow */}
      <svg className="absolute inset-0 z-20 pointer-events-none" width="1920" height="1008">
        <polygon points="1434,764 1424,784 1619,879" fill="#d20a0a" />
      </svg>
      <div className="absolute z-20 left-[1399px] top-[749px] w-[37px] h-[37px] rounded-full bg-[#d20a0a] text-white text-[14px] font-semibold flex items-center justify-center">1</div>
    </div>
  );
}
